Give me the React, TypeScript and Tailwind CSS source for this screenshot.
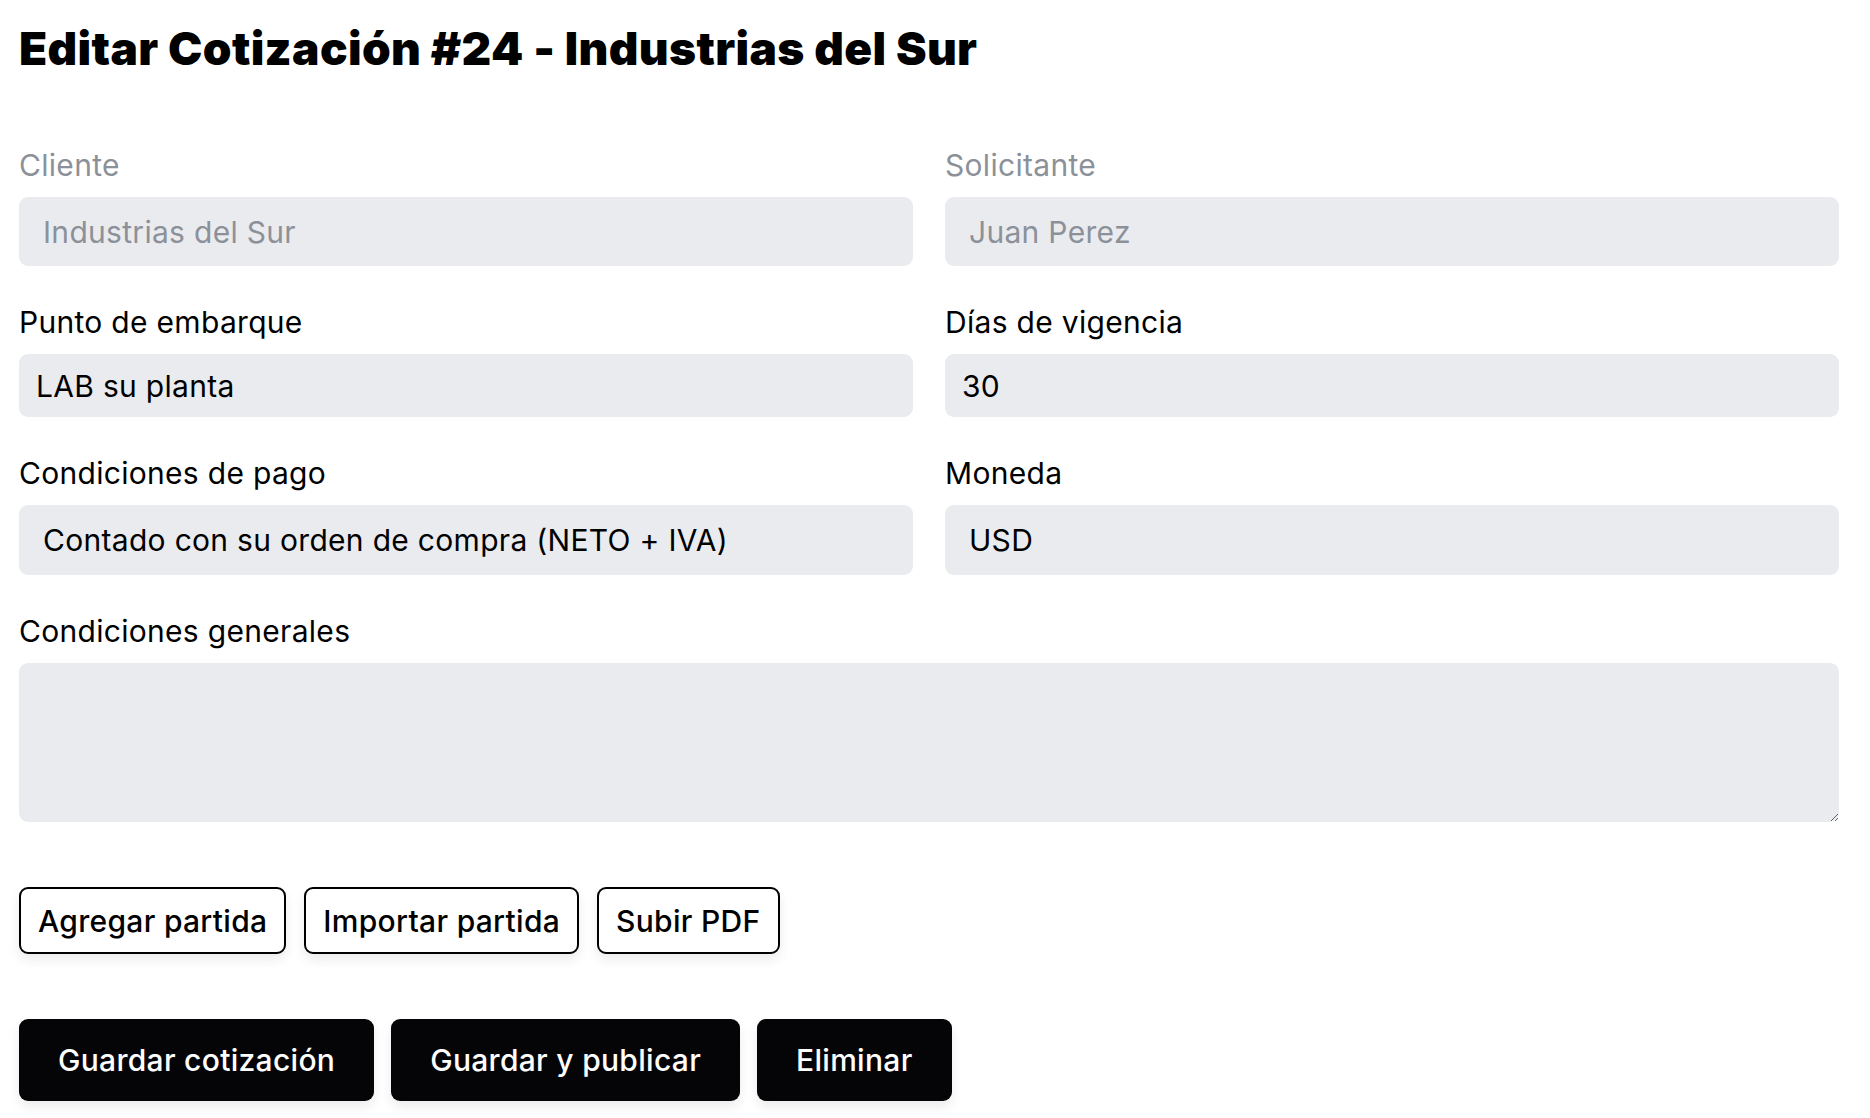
import React from "react";

const FONT = { fontFamily: "Inter, 'Noto Sans', sans-serif" };

const fieldBase =
  "block w-full rounded-[9px] bg-[#eaebef] text-[30px] leading-[36px] tracking-[0.3px] outline-none appearance-none border-0";

const Label = ({ children, muted }: { children: React.ReactNode; muted?: boolean }) => (
  <label
    className={`mb-4 block text-[30px] leading-[32px] tracking-[0.3px] ${muted ? "text-[#8c9199]" : "text-black"}`}
  >
    {children}
  </label>
);

export default function App() {
  return (
    <div className="min-h-screen bg-white pb-10 pl-[19px] pr-[31px] pt-[21px]" style={FONT}>
      <h1 className="text-[46px] font-black leading-[55px] tracking-[0.35px] text-black">
        Editar Cotización #24 - Industrias del Sur
      </h1>

      <form className="mt-[73px]" onSubmit={(e) => e.preventDefault()}>
        <div className="grid grid-cols-2 gap-x-8 gap-y-10">
          {/* Cliente */}
          <div>
            <Label muted>Cliente</Label>
            <select
              disabled
              className={`${fieldBase} h-[69px] pl-6 text-[#8c9199] opacity-100`}
              defaultValue="sur"
            >
              <option value="sur">Industrias del Sur</option>
            </select>
          </div>

          {/* Solicitante */}
          <div>
            <Label muted>Solicitante</Label>
            <select
              disabled
              className={`${fieldBase} h-[69px] pl-6 text-[#8c9199] opacity-100`}
              defaultValue="juan"
            >
              <option value="juan">Juan Perez</option>
            </select>
          </div>

          <div>
            <Label>Punto de embarque</Label>
            <input
              type="text"
              defaultValue="LAB su planta"
              className={`${fieldBase} h-[63px] px-[17px] text-black`}
            />
          </div>

          <div>
            <Label>Días de vigencia</Label>
            <input
              type="text"
              defaultValue="30"
              className={`${fieldBase} h-[63px] px-[17px] text-black`}
            />
          </div>

          <div>
            <Label>Condiciones de pago</Label>
            <select className={`${fieldBase} h-[70px] pl-6 text-black`} defaultValue="contado">
              <option value="contado">Contado con su orden de compra (NETO + IVA)</option>
            </select>
          </div>

          <div>
            <Label>Moneda</Label>
            <select className={`${fieldBase} h-[70px] pl-6 text-black`} defaultValue="usd">
              <option value="usd">USD</option>
              <option value="mxn">MXN</option>
            </select>
          </div>

          <div className="col-span-2">
            <Label>Condiciones generales</Label>
            <textarea className={`${fieldBase} h-[159px] resize-y px-[17px] py-3 text-black`} />
          </div>
        </div>

        {/* Partidas */}
        <div className="mt-[65px] flex gap-[18px]">
          {["Agregar partida", "Importar partida", "Subir PDF"].map((t) => (
            <button
              key={t}
              type="button"
              className="h-[67px] rounded-[9px] border-2 border-black bg-white px-[17px] text-[30px] font-medium leading-[36px] tracking-[0.3px] text-black shadow-[0_6px_12px_rgba(0,0,0,0.08)]"
            >
              {t}
            </button>
          ))}
        </div>

        {/* Acciones */}
        <div className="mt-[65px] flex gap-[17px]">
          {["Guardar cotización", "Guardar y publicar", "Eliminar"].map((t) => (
            <button
              key={t}
              type="button"
              className="h-[82px] rounded-[9px] bg-[#050507] px-[39px] text-[30px] font-medium leading-[36px] tracking-[0.3px] text-white shadow-[0_6px_12px_rgba(0,0,0,0.08)]"
            >
              {t}
            </button>
          ))}
        </div>
      </form>
    </div>
  );
}
